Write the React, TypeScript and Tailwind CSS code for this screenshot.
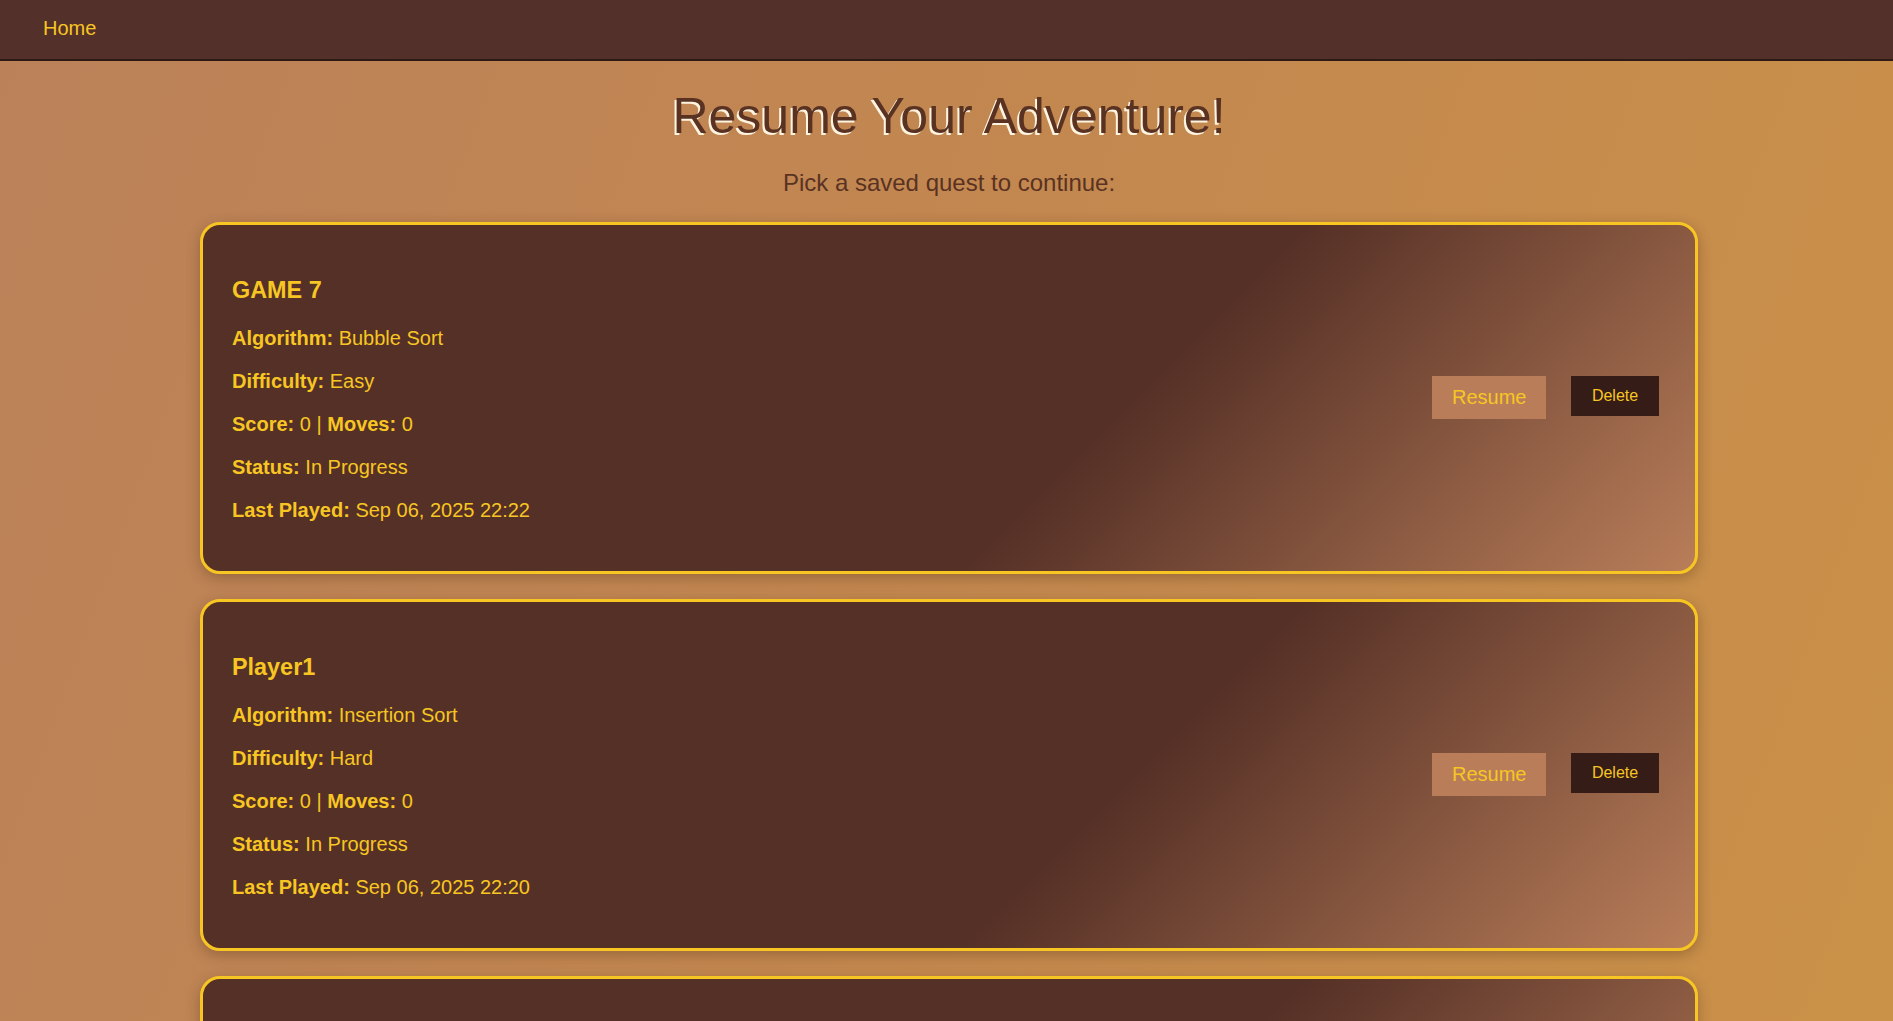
import React from "react";

type Save = {
  name: string;
  algorithm: string;
  difficulty: string;
  score: number;
  moves: number;
  status: string;
  lastPlayed: string;
};

const saves: Save[] = [
  { name: "GAME 7", algorithm: "Bubble Sort", difficulty: "Easy", score: 0, moves: 0, status: "In Progress", lastPlayed: "Sep 06, 2025 22:22" },
  { name: "Player1", algorithm: "Insertion Sort", difficulty: "Hard", score: 0, moves: 0, status: "In Progress", lastPlayed: "Sep 06, 2025 22:20" },
  { name: "Game 6", algorithm: "Selection Sort", difficulty: "Medium", score: 0, moves: 0, status: "In Progress", lastPlayed: "Sep 06, 2025 22:18" },
];

function Card({ s }: { s: Save }) {
  return (
    <div className="w-[1498px] h-[352px] shrink-0 rounded-[20px] border-[3px] border-[#f7c623] bg-[linear-gradient(135deg,#553026_0%,#553026_60%,#b97e59_100%)] shadow-[0_4px_14px_rgba(60,30,10,0.3)] px-[29px] py-[29px] flex items-center justify-between text-[#f7c623]">
      <div className="flex flex-col self-start">
        <h3 className="mt-[23px] text-[23.4px] leading-[27px] font-bold">{s.name}</h3>
        <div className="mt-[23px] flex flex-col gap-[20px] mb-[20px] text-[20px] leading-[23px]">
          <p><span className="font-bold">Algorithm:</span> {s.algorithm}</p>
          <p><span className="font-bold">Difficulty:</span> {s.difficulty}</p>
          <p><span className="font-bold">Score:</span> {s.score} | <span className="font-bold">Moves:</span> {s.moves}</p>
          <p><span className="font-bold">Status:</span> {s.status}</p>
          <p><span className="font-bold">Last Played:</span> {s.lastPlayed}</p>
        </div>
      </div>
      <div className="flex items-start gap-[25px] mr-[7px] mt-[-2px]">
        <button className="bg-[#b97e59] text-[#f7c623] text-[20px] leading-[23px] px-[20px] py-[10px] w-[114px]">Resume</button>
        <button className="bg-[#351c17] text-[#f7c623] text-[16px] leading-[18px] px-[20px] py-[11px] w-[88px]">Delete</button>
      </div>
    </div>
  );
}

export default function App() {
  return (
    <div
      className="min-h-screen h-[1021px] overflow-hidden bg-[linear-gradient(110deg,#bb8159_0%,#c3884f_50%,#ca9148_100%)]"
      style={{ fontFamily: '"Liberation Sans", Arial, sans-serif' }}
    >
      <nav className="h-[61px] bg-[#54302a] border-b-2 border-[#2e1a15] flex items-center px-[43px] pb-[2px]">
        <a className="text-[20px] leading-[23px] text-[#f7c623] cursor-pointer">Home</a>
      </nav>
      <div className="flex flex-col items-center pl-[5px]">
        <h1 className="mt-[27px] text-[50px] leading-[57px] text-[#5a3222] [text-shadow:-2px_2px_0_#fff4e0]">
          Resume Your Adventure!
        </h1>
        <p className="mt-[24px] text-[24px] leading-[28px] text-[#5a3222]">Pick a saved quest to continue:</p>
        <div className="mt-[25px] flex flex-col gap-[25px]">
          {saves.map((s) => (
            <Card key={s.name} s={s} />
          ))}
        </div>
      </div>
    </div>
  );
}
